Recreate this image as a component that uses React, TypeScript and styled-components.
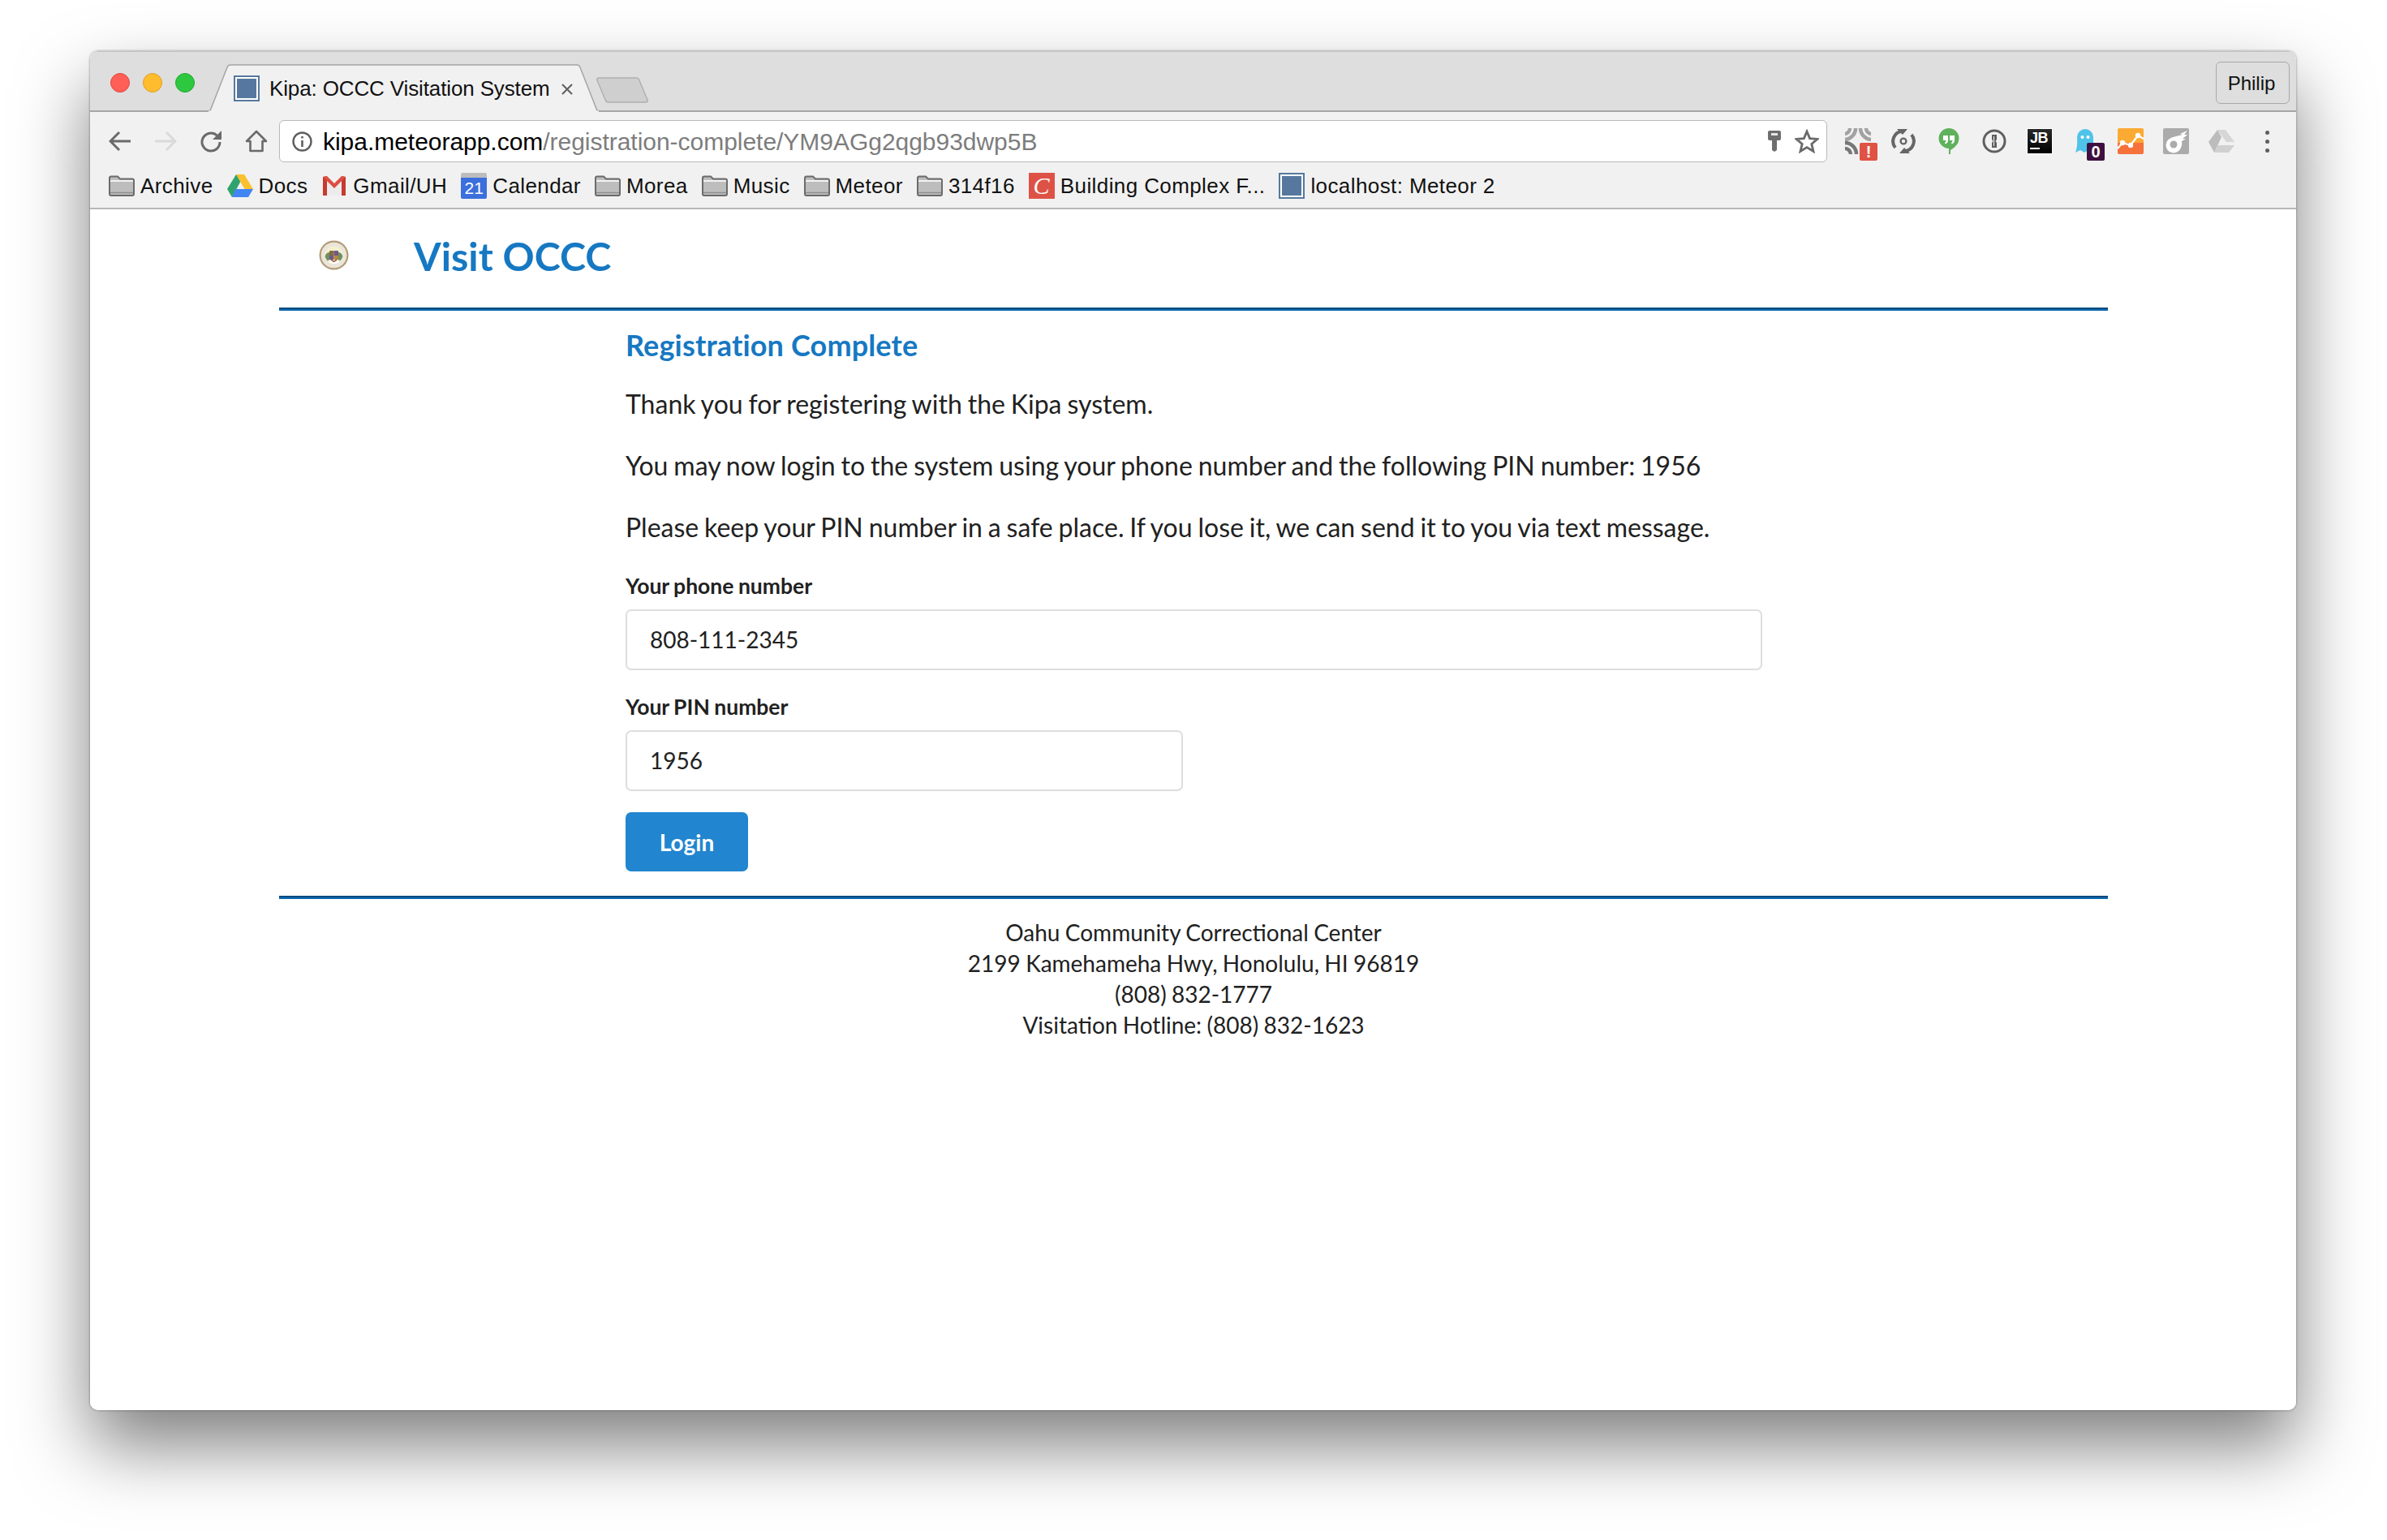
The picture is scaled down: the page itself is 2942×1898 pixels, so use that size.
import React from 'react';
import styled, { createGlobalStyle } from 'styled-components';

const GlobalStyle = createGlobalStyle`
  html, body { margin: 0; padding: 0; background: #fff; }
  body { font-family: Lato, "Liberation Sans", sans-serif; color: #212121; }
  * { box-sizing: border-box; }
`;

const Stage = styled.div`
  width: 2942px;
  height: 1898px;
  padding: 63px 112px 0 111px;
  overflow: hidden;
`;

const Window = styled.div`
  width: 2719px;
  height: 1675px;
  display: flex;
  flex-direction: column;
  background: #fff;
  border-radius: 10px;
  overflow: hidden;
`;

const WindowFrame = styled.div`
  width: 2719px;
  height: 1675px;
  border-radius: 10px;
  box-shadow: 0 44px 88px rgba(0, 0, 0, 0.5), 0 0 3px rgba(0, 0, 0, 0.45);
`;

/* ---- chrome: tab strip ---- */
const TabStrip = styled.div`
  height: 75px;
  flex: none;
  display: flex;
  align-items: flex-end;
  background: #dedede;
  border-top: 1px solid #c4c4c4;
  border-bottom: 2px solid #a5a5a5;
  font-family: "Liberation Sans", Arial, sans-serif;
  position: relative;
`;

const Lights = styled.div`
  align-self: flex-start;
  display: flex;
  gap: 16px;
  width: 145px;
  padding: 26px 0 0 25px;
`;

const Light = styled.span<{ $fill: string; $edge: string }>`
  width: 24px;
  height: 24px;
  border-radius: 50%;
  background: ${p => p.$fill};
  border: 1px solid ${p => p.$edge};
`;

const Tab = styled.div`
  position: relative;
  width: 483px;
  height: 59px;
  margin-bottom: -2px;
  display: flex;
  align-items: center;
  padding: 1px 0 0 32px;
  flex: none;
`;

const TabShape = styled.svg`
  position: absolute;
  left: 0;
  top: 0;
  width: 483px;
  height: 59px;
`;

const Favicon = styled.span`
  position: relative;
  flex: none;
  width: 32px;
  height: 32px;
  background: #56789e;
  border: 2px solid #56789e;
  box-shadow: inset 0 0 0 2px #fff;
`;

const TabTitle = styled.span`
  position: relative;
  margin-left: 12px;
  font-size: 26px;
  letter-spacing: -0.13px;
  color: #111;
  white-space: nowrap;
`;

const TabClose = styled.svg`
  position: absolute;
  left: 435px;
  top: 23px;
  width: 16px;
  height: 16px;
`;

const NewTab = styled.svg`
  flex: none;
  width: 66px;
  height: 33px;
  margin: 0 0 8px -5px;
`;

const ProfileButton = styled.div`
  position: absolute;
  right: 8px;
  top: 12px;
  width: 91px;
  height: 52px;
  display: flex;
  align-items: center;
  justify-content: center;
  padding: 2px 3px 0 0;
  border: 1.5px solid #a8a8a8;
  border-radius: 6px;
  font-size: 24px;
  color: #111;
`;

/* ---- chrome: toolbar ---- */
const Toolbar = styled.div`
  height: 62px;
  flex: none;
  display: flex;
  align-items: flex-start;
  padding: 10px 8px 0 9px;
  background: #f1f1f1;
  font-family: "Liberation Sans", Arial, sans-serif;
`;

const ToolCell = styled.div`
  position: relative;
  flex: none;
  width: 56px;
  height: 52px;
  display: flex;
  align-items: center;
  justify-content: center;
`;

const AddressBar = styled.div`
  flex: 1;
  height: 52px;
  margin: 0 10px 0 0;
  display: flex;
  align-items: center;
  gap: 13px;
  padding: 0 9px 0 15px;
  background: #fff;
  border: 1.5px solid #b9b9b9;
  border-radius: 6px;
  font-size: 30px;
  white-space: nowrap;
`;

const UrlText = styled.div`
  flex: 1;
  padding-top: 2px;
  letter-spacing: -0.03px;
  color: #000;
`;

const UrlPath = styled.span`
  color: #7d7d7d;
`;

const Badge = styled.span<{ $bg: string }>`
  position: absolute;
  left: 30px;
  top: 28px;
  width: 22px;
  height: 22px;
  border-radius: 2px;
  background: ${p => p.$bg};
  color: #fff;
  font-size: 20px;
  font-weight: 700;
  line-height: 22px;
  text-align: center;
`;

const JbBox = styled.div`
  width: 32px;
  height: 32px;
  padding: 3px 0 0 3px;
  background: linear-gradient(#2a2a2a, #000);
  border: 1.5px solid #fff;
  color: #fff;
  font-size: 18px;
  font-weight: 700;
  line-height: 16px;
  letter-spacing: -0.5px;
`;

const JbDash = styled.div`
  width: 12px;
  height: 2px;
  margin-top: 4px;
  background: #fff;
`;

const Dots = styled.div`
  display: flex;
  flex-direction: column;
  gap: 6px;
`;

const Dot = styled.span`
  width: 5px;
  height: 5px;
  border-radius: 50%;
  background: #5f5f5f;
`;

/* ---- chrome: bookmarks ---- */
const BookmarkBar = styled.div`
  height: 58px;
  flex: none;
  display: flex;
  align-items: center;
  gap: 17px;
  padding: 2px 0 0 23px;
  background: #f1f1f1;
  border-bottom: 2px solid #b9b9b9;
  font-family: "Liberation Sans", Arial, sans-serif;
  font-size: 26px;
  letter-spacing: 0.4px;
  color: #111;
`;

const Bookmark = styled.div`
  display: flex;
  align-items: center;
  gap: 7px;
  white-space: nowrap;
`;

const BookIcon = styled.svg`
  flex: none;
  width: 32px;
  height: 32px;
`;

const CalendarIcon = styled.div`
  flex: none;
  width: 32px;
  height: 32px;
  padding-top: 6px;
  background: linear-gradient(#bdbdbd 6px, #3b6fdc 6px);
  border-radius: 2px;
  color: #fff;
  font-size: 21px;
  letter-spacing: 0;
  line-height: 26px;
  text-align: center;
`;

const CIcon = styled.div`
  flex: none;
  width: 32px;
  height: 32px;
  background: #de5246;
  color: #fff;
  font-family: "Liberation Serif", serif;
  font-style: italic;
  font-size: 30px;
  line-height: 32px;
  text-align: center;
`;

/* ---- page ---- */
const Page = styled.div`
  flex: 1;
  width: 2254px;
  margin-left: 233px;
  display: flex;
  flex-direction: column;
`;

const Header = styled.header`
  height: 121px;
  flex: none;
  display: flex;
  align-items: center;
  padding: 0 0 8px 49px;
`;

const Seal = styled.svg`
  width: 37px;
  height: 37px;
  flex: none;
  margin-right: 80px;
`;

const Title = styled.h1`
  margin: 0;
  font-size: 48.5px;
  font-weight: 700;
  line-height: 60px;
  color: #1678c2;
`;

const Divider = styled.div<{ $gap?: number }>`
  height: 4px;
  flex: none;
  margin-top: ${p => p.$gap ?? 0}px;
  background: linear-gradient(#0a4a7d 50%, #0c69b0 50%);
`;

const Content = styled.main`
  width: 1401px;
  margin-left: 427px;
`;

const Heading = styled.h2`
  margin: 18px 0 0;
  font-size: 36px;
  font-weight: 700;
  letter-spacing: 0.15px;
  line-height: 48px;
  color: #1678c2;
`;

const Para = styled.p`
  margin: 36px 0 0;
  font-size: 32px;
  line-height: 40px;
  word-spacing: -1.3px;
  &:first-of-type { margin-top: 29px; }
`;

const Fields = styled.form`
  padding-top: 7px;
`;

const Label = styled.label`
  display: block;
  margin: 27px 0 11px;
  font-size: 26.5px;
  font-weight: 700;
  line-height: 36px;
  word-spacing: -1px;
`;

const Input = styled.input<{ $half?: boolean }>`
  display: block;
  width: ${p => (p.$half ? '687px' : '100%')};
  height: 75px;
  padding: 0 28px 2px;
  border: 2px solid #dedede;
  border-radius: 7px;
  outline: none;
  font-family: Lato, sans-serif;
  font-size: 28px;
  color: #212121;
`;

const LoginButton = styled.button`
  display: block;
  width: 151px;
  height: 73px;
  margin-top: 26px;
  border: none;
  border-radius: 7px;
  background: #2185d0;
  color: #fff;
  font-family: Lato, sans-serif;
  font-size: 28px;
  font-weight: 700;
`;

const Footer = styled.footer`
  margin-top: 22px;
  font-size: 28px;
  line-height: 38px;
  word-spacing: -0.8px;
  text-align: center;
`;

const Folder = () => (
  <BookIcon viewBox="0 0 32 32">
    <path d="M1 6.5 Q1 4.5 3 4.5 H11 L14 7.5 H29 Q31 7.5 31 9.5 V26 Q31 28 29 28 H3 Q1 28 1 26 Z" fill="#bdbdbd" stroke="#6b6b6b" strokeWidth="2" />
    <path d="M2 10 H30" stroke="#f2f2f2" strokeWidth="2" />
    <path d="M2 24.5 H30" stroke="#8e8e8e" strokeWidth="1.5" />
  </BookIcon>
);

const DriveColor = () => (
  <BookIcon viewBox="0 0 32 32">
    <path d="M11 2 H21 L32 20 H21.5 Z" fill="#fbc02d" />
    <path d="M11 2 L16.3 11 L6 30 L0 20 Z" fill="#2fa36b" />
    <path d="M10 20 H32 L26 30 H6 Z" fill="#4285f4" />
  </BookIcon>
);

const Gmail = () => (
  <BookIcon viewBox="0 0 32 32">
    <path d="M3 4 H7 L16 13 L25 4 H29 V28 H3 Z" fill="#ececec" />
    <path d="M2 5 L7 4 V28 H2 Z M25 4 L30 5 V28 H25 Z" fill="#c8392e" />
    <path d="M2 5 L7 4 L16 13 L25 4 L30 5 L16 19 Z" fill="#dc4e41" />
  </BookIcon>
);

const App = () => (
  <Stage>
    <GlobalStyle />
    <WindowFrame>
      <Window>
        <TabStrip>
          <Lights>
            <Light $fill="#ff5f57" $edge="#e2463f" />
            <Light $fill="#ffbd2e" $edge="#de9f26" />
            <Light $fill="#2ec840" $edge="#1fa92f" />
          </Lights>
          <Tab>
            <TabShape viewBox="0 0 483 59">
              <path d="M0 58 H1 Q3 58 4 55 L24 4 Q25 1 28 1 H455 Q458 1 459 4 L479 55 Q480 58 483 58 V59 H0 Z" fill="#f1f1f1" stroke="#a5a5a5" strokeWidth="1.5" />
              <path d="M1 59 H482" stroke="#f1f1f1" strokeWidth="3" />
            </TabShape>
            <Favicon />
            <TabTitle>Kipa: OCCC Visitation System</TabTitle>
            <TabClose viewBox="0 0 16 16">
              <path d="M2 2 L14 14 M14 2 L2 14" stroke="#5f5f5f" strokeWidth="2" />
            </TabClose>
          </Tab>
          <NewTab viewBox="0 0 66 33">
            <path d="M4 1 H50 Q53 1 54 4 L64 28 Q65 31 62 31 H16 Q13 31 12 28 L2 4 Q1 1 4 1 Z" fill="#cfcfcf" stroke="#b0b0b0" strokeWidth="1.5" />
          </NewTab>
          <ProfileButton>Philip</ProfileButton>
        </TabStrip>

        <Toolbar>
          <ToolCell>
            <svg width="28" height="26" viewBox="0 0 28 26">
              <path d="M27 13 H3 M13 2 L2 13 L13 24" fill="none" stroke="#6a6a6a" strokeWidth="3" />
            </svg>
          </ToolCell>
          <ToolCell>
            <svg width="28" height="26" viewBox="0 0 28 26">
              <path d="M1 13 H25 M15 2 L26 13 L15 24" fill="none" stroke="#dadada" strokeWidth="3" />
            </svg>
          </ToolCell>
          <ToolCell>
            <svg width="28" height="28" viewBox="0 0 28 28">
              <path d="M21.5 7 A11 11 0 1 0 25 15" fill="none" stroke="#6a6a6a" strokeWidth="3" />
              <path d="M27 1 V12 H16 Z" fill="#6a6a6a" />
            </svg>
          </ToolCell>
          <ToolCell>
            <svg width="28" height="28" viewBox="0 0 28 28">
              <path d="M14 2 L26 14 H21.5 V26 H6.5 V14 H2 Z" fill="none" stroke="#6a6a6a" strokeWidth="2.6" strokeLinejoin="round" />
            </svg>
          </ToolCell>
          <AddressBar>
            <svg width="25" height="25" viewBox="0 0 25 25" style={{ flex: 'none' }}>
              <circle cx="12.5" cy="12.5" r="11" fill="none" stroke="#5f5f5f" strokeWidth="2.4" />
              <path d="M12.5 11 V19 M12.5 6 V8.6" stroke="#5f5f5f" strokeWidth="2.6" />
            </svg>
            <UrlText>
              kipa.meteorapp.com<UrlPath>/registration-complete/YM9AGg2qgb93dwp5B</UrlPath>
            </UrlText>
            <svg width="16" height="26" viewBox="0 0 16 26" style={{ flex: 'none', marginRight: '4px' }}>
              <path d="M2 0 H14 Q16 0 16 2 V10 Q16 12 14 12 H11 V24 L8 26 L5 24 V12 H2 Q0 12 0 10 V2 Q0 0 2 0 Z" fill="#6e6e6e" />
              <rect x="4" y="3" width="8" height="3" fill="#e5e5e5" />
            </svg>
            <svg width="30" height="30" viewBox="0 0 30 30" style={{ flex: 'none' }}>
              <path d="M15 3 L18.6 11.6 L28 12.4 L20.8 18.4 L23 27.5 L15 22.6 L7 27.5 L9.2 18.4 L2 12.4 L11.4 11.6 Z" fill="none" stroke="#6a6a6a" strokeWidth="2.8" strokeLinejoin="miter" />
            </svg>
          </AddressBar>
          <ToolCell>
            <svg width="32" height="32" viewBox="0 0 32 32">
              <g fill="none" stroke="#a2a2a2" strokeWidth="4.5">
                <path d="M6 0 A7 7 0 0 1 0 7" />
                <path d="M26 0 A7 7 0 0 0 32 7" />
                <path d="M13 0 A14 14 0 0 1 0 14" />
                <path d="M19 0 A14 14 0 0 0 32 14" />
              </g>
              <g fill="none" stroke="#777" strokeWidth="4.5">
                <path d="M0 18 A14 14 0 0 1 14 32" />
                <path d="M0 25 A7 7 0 0 1 7 32" />
              </g>
            </svg>
            <Badge $bg="#e05243">!</Badge>
          </ToolCell>
          <ToolCell>
            <svg width="30" height="30" viewBox="0 0 30 30">
              <path d="M5 23 A12.5 12.5 0 0 1 13 2.7" fill="none" stroke="#666" strokeWidth="4" />
              <path d="M25 7 A12.5 12.5 0 0 1 17 27.3" fill="none" stroke="#666" strokeWidth="4" />
              <path d="M7 0 H20 L14 7 Z M23 30 H10 L16 23 Z" fill="#666" />
              <circle cx="15" cy="15" r="3.4" fill="none" stroke="#666" strokeWidth="2.4" />
            </svg>
          </ToolCell>
          <ToolCell>
            <svg width="26" height="32" viewBox="0 0 26 32">
              <path d="M13 0 A12.5 12.5 0 0 1 25.5 12.5 Q25.5 21 15 27 V32 L13 32 A0 0 0 0 1 13 25 A12.5 12.5 0 0 1 13 0 Z" fill="#5fb15c" />
              <path d="M6 9 H12 V15 Q12 18 8.5 19.5 L8 18 Q9.5 17 9.5 15 H6 Z M14 9 H20 V15 Q20 18 16.5 19.5 L16 18 Q17.5 17 17.5 15 H14 Z" fill="#fff" />
            </svg>
          </ToolCell>
          <ToolCell>
            <svg width="30" height="30" viewBox="0 0 30 30">
              <circle cx="15" cy="15" r="13" fill="none" stroke="#5f5f5f" strokeWidth="3" />
              <path d="M12 7 H18 V13 L16.5 15 L18 17 V23 H12 V17 L13.5 15 L12 13 Z" fill="#5f5f5f" />
              <path d="M14.5 9 V21" stroke="#f1f1f1" strokeWidth="1" />
            </svg>
          </ToolCell>
          <ToolCell>
            <JbBox>
              JB
              <JbDash />
            </JbBox>
          </ToolCell>
          <ToolCell>
            <svg width="24" height="32" viewBox="0 0 24 32">
              <path d="M2 11 A10 10 0 0 1 22 11 V30 L16 27 L11 30 L6 27 L0 30 Q3 22 2 11 Z" fill="#4fc3ea" />
              <circle cx="8.5" cy="11" r="2" fill="#fff" />
              <circle cx="15.5" cy="11" r="2" fill="#fff" />
            </svg>
            <Badge $bg="#3e103f">0</Badge>
          </ToolCell>
          <ToolCell>
            <svg width="32" height="32" viewBox="0 0 32 32">
              <defs>
                <linearGradient id="ga" x1="0" y1="0" x2="0" y2="1">
                  <stop offset="0.55" stopColor="#fbaa34" />
                  <stop offset="0.55" stopColor="#f5723a" />
                </linearGradient>
              </defs>
              <rect width="32" height="32" rx="2" fill="url(#ga)" />
              <path d="M0 25 L6 18 L16 21 L25 9 L32 13" fill="none" stroke="#fff" strokeWidth="2.2" />
              <circle cx="6" cy="18" r="3.2" fill="#fff" />
              <circle cx="16" cy="21" r="3.2" fill="#fff" />
              <circle cx="25" cy="9" r="3.2" fill="#fff" />
            </svg>
          </ToolCell>
          <ToolCell>
            <svg width="32" height="32" viewBox="0 0 32 32">
              <rect width="32" height="32" rx="2" fill="#ababab" />
              <path d="M30 3 L21 7 L24 8 L16 10 Q4 12 3.5 21 A9.5 9.5 0 0 0 22 24 Q24 20 23 16 L28 13 L24 13 L30 8 L26 8 Z" fill="#fff" />
              <circle cx="13" cy="20" r="4.5" fill="#ababab" />
            </svg>
          </ToolCell>
          <ToolCell>
            <svg width="32" height="30" viewBox="0 0 32 30">
              <path d="M11 1 H21 L32 16 H22 Z" fill="#d6d6d6" />
              <path d="M11 1 L16 10 L7 29 L0 16 Z" fill="#bcbcbc" />
              <path d="M11 20 H32 L25 29 H7 Z" fill="#d0d0d0" />
            </svg>
          </ToolCell>
          <ToolCell>
            <Dots>
              <Dot />
              <Dot />
              <Dot />
            </Dots>
          </ToolCell>
        </Toolbar>

        <BookmarkBar>
          <Bookmark><Folder />Archive</Bookmark>
          <Bookmark><DriveColor />Docs</Bookmark>
          <Bookmark><Gmail />Gmail/UH</Bookmark>
          <Bookmark><CalendarIcon>21</CalendarIcon>Calendar</Bookmark>
          <Bookmark><Folder />Morea</Bookmark>
          <Bookmark><Folder />Music</Bookmark>
          <Bookmark><Folder />Meteor</Bookmark>
          <Bookmark><Folder />314f16</Bookmark>
          <Bookmark><CIcon>C</CIcon>Building Complex F...</Bookmark>
          <Bookmark><Favicon />localhost: Meteor 2</Bookmark>
        </BookmarkBar>

        <Page>
          <Header>
            <Seal viewBox="0 0 37 37">
              <circle cx="18.5" cy="18.5" r="18" fill="#b39c78" />
              <circle cx="18.5" cy="18.5" r="15.8" fill="#ebe6da" />
              <circle cx="18.5" cy="18.5" r="11" fill="#f4f0cf" />
              <path d="M7.6 20 Q9 15 13 15 V27 Q9 25 7.6 20 Z M29.4 20 Q28 15 24 15 V27 Q28 25 29.4 20 Z" fill="#6f9060" />
              <rect x="13" y="13" width="5.5" height="6" fill="#8a6a3c" />
              <rect x="18.5" y="13" width="5.5" height="6" fill="#6f5a86" />
              <rect x="13" y="19" width="5.5" height="5" fill="#6f5a86" />
              <rect x="18.5" y="19" width="5.5" height="5" fill="#b5893f" />
              <path d="M11 24 Q18.5 30 26 24 L25 27 Q18.5 31 12 27 Z" fill="#fff" />
              <path d="M15 24 L18.5 26.5 L22 24" fill="none" stroke="#8a3b2b" strokeWidth="1.4" />
            </Seal>
            <Title>Visit OCCC</Title>
          </Header>
          <Divider />
          <Content>
            <Heading>Registration Complete</Heading>
            <Para>Thank you for registering with the Kipa system.</Para>
            <Para>You may now login to the system using your phone number and the following PIN number: 1956</Para>
            <Para>Please keep your PIN number in a safe place. If you lose it, we can send it to you via text message.</Para>
            <Fields>
              <Label>Your phone number</Label>
              <Input readOnly value="808-111-2345" />
              <Label>Your PIN number</Label>
              <Input $half readOnly value="1956" />
              <LoginButton type="button">Login</LoginButton>
            </Fields>
          </Content>
          <Divider $gap={30} />
          <Footer>
            <div>Oahu Community Correctional Center</div>
            <div>2199 Kamehameha Hwy, Honolulu, HI 96819</div>
            <div>(808) 832-1777</div>
            <div>Visitation Hotline: (808) 832-1623</div>
          </Footer>
        </Page>
      </Window>
    </WindowFrame>
  </Stage>
);

export default App;
